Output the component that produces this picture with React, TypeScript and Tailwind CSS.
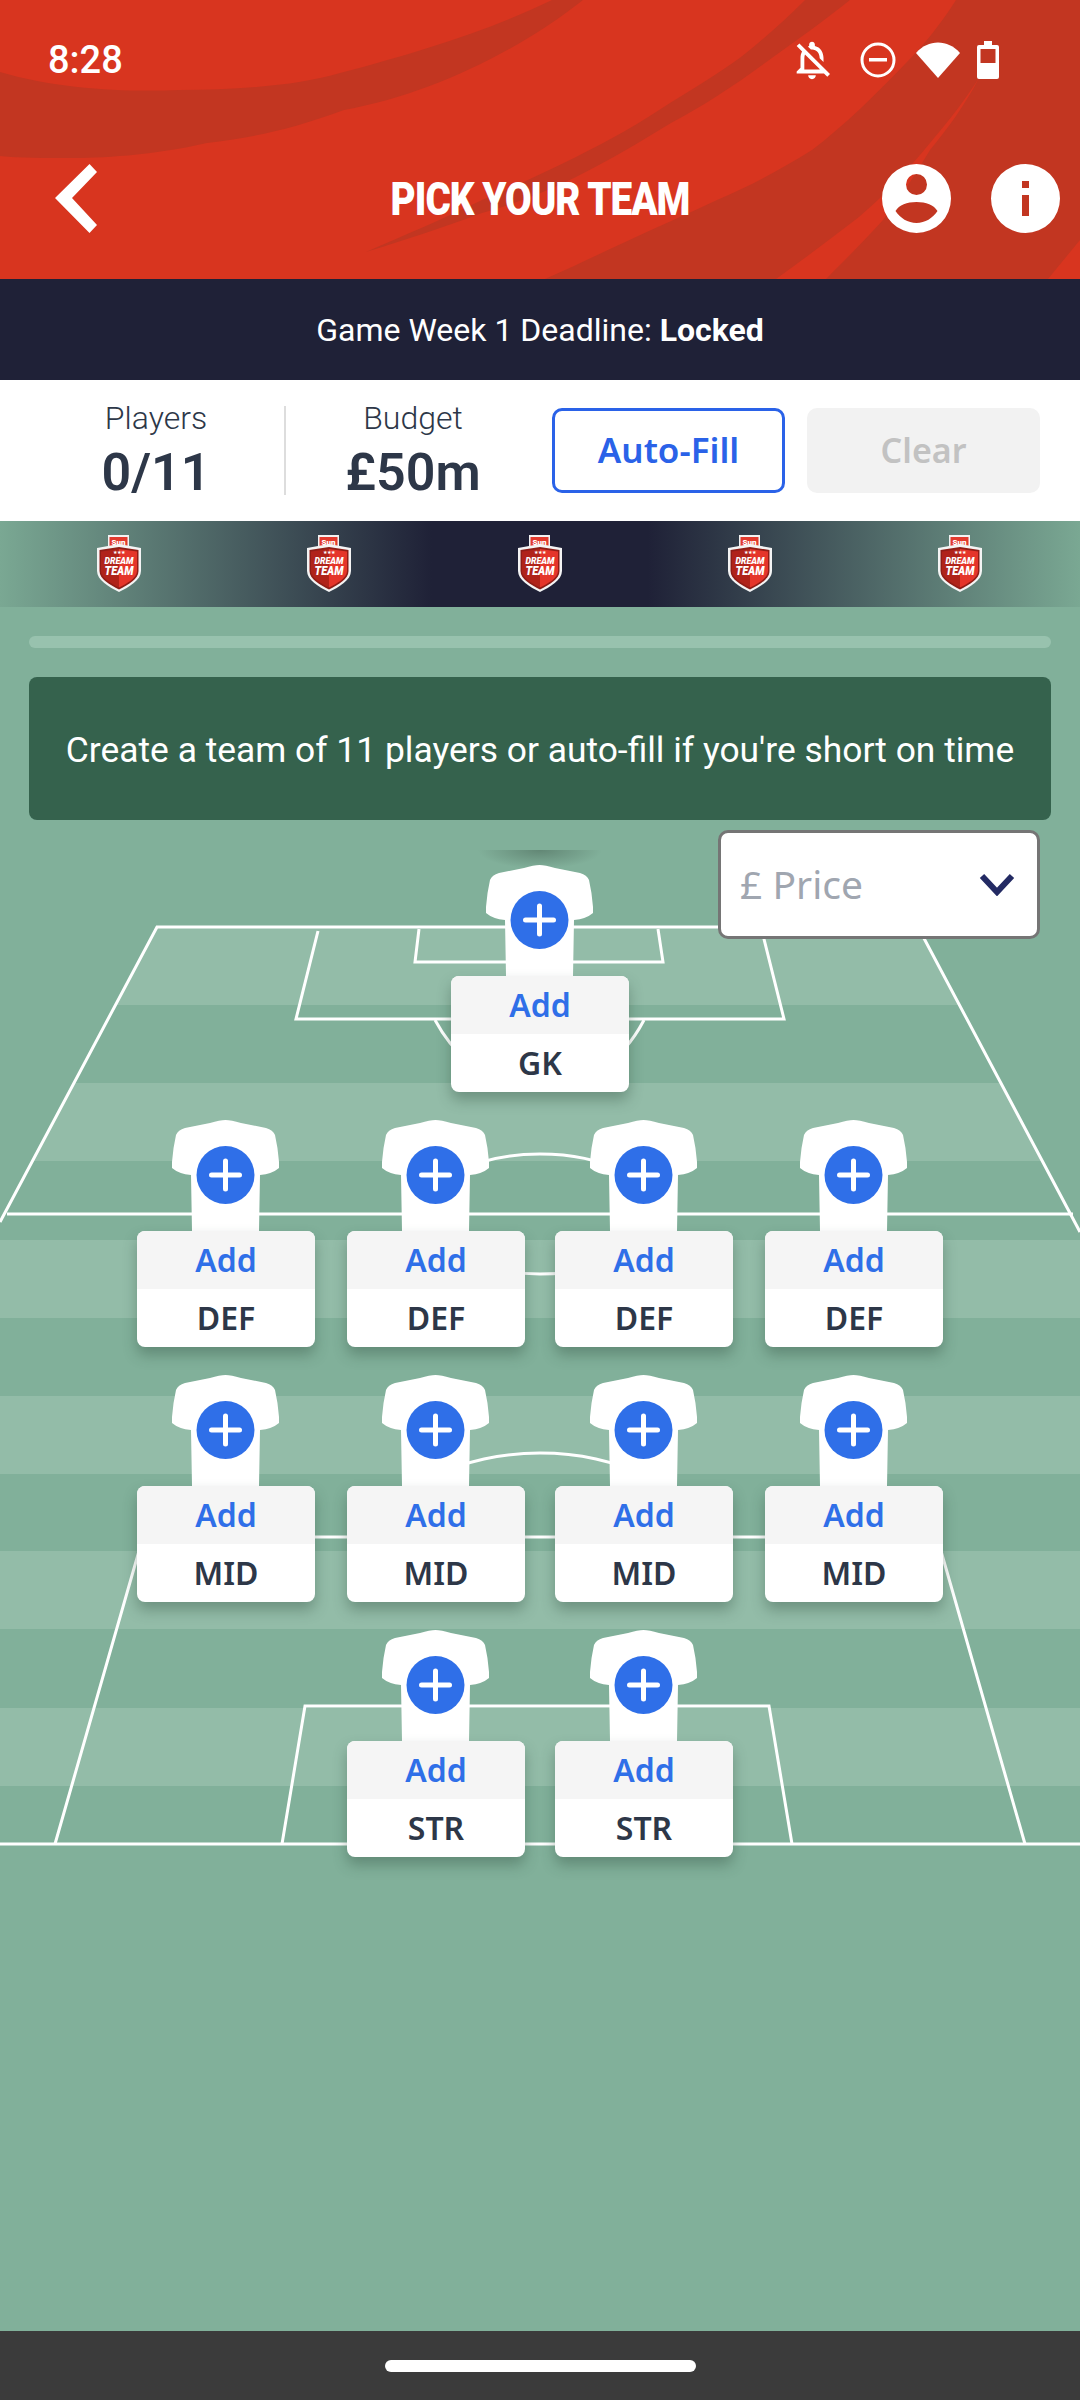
import { MdOutlineNotificationsOff } from 'react-icons/md';

const rows = [
  { label: 'GK', count: 1 },
  { label: 'DEF', count: 4 },
  { label: 'MID', count: 4 },
  { label: 'STR', count: 2 },
];

function HeaderArt() {
  return (
    <svg className="absolute inset-0 w-full h-full" viewBox="0 0 1080 279" preserveAspectRatio="none">
      <path
        fill="#c23621"
        d="M0 72 C60 90 130 92 179 90 C240 90 300 85 340 73 C420 52 490 30 552 0 L583 0 C520 50 430 95 344 110 C290 130 250 138 207 143 C150 156 100 158 69 158 C45 158 20 158 0 156 Z"
      />
      <path
        fill="#c23621"
        d="M805 0 C785 20 765 38 741 57 C720 72 695 88 670 103 C640 123 610 140 576 157 C545 172 515 187 482 200 C445 218 405 235 366 252 C405 240 445 227 482 213 C515 204 545 192 576 177 C610 160 640 142 671 123 C705 105 735 85 765 63 C797 40 825 20 850 0 Z"
      />
      <path
        fill="#c23621"
        d="M956 0 C942 22 925 44 906 63 C875 95 845 125 812 150 C780 170 750 186 717 200 C685 215 655 228 623 243 C595 256 570 268 545 279 L776 279 C805 258 832 238 859 217 C885 195 908 170 930 143 C948 122 965 100 979 78 C965 105 948 128 930 150 C915 175 900 198 883 220 C865 240 845 260 826 279 L1048 279 L1080 240 L1080 0 Z"
      />
    </svg>
  );
}

function StatusIcons() {
  return (
    <div className="flex items-center">
      <MdOutlineNotificationsOff size={46} className="text-white -mr-[3px] -my-[4px]" />
      <svg className="ml-[28px] w-[36px] h-[36px]" viewBox="0 0 36 36">
        <circle cx="18" cy="18" r="16" fill="none" stroke="white" strokeWidth="3" />
        <rect x="9" y="16" width="18" height="3.5" fill="white" />
      </svg>
      <svg className="ml-[20px] w-[44px] h-[36px]" viewBox="0 0 44 36">
        <path d="M0 11 C12 -3 32 -3 44 11 L22 36 Z" fill="white" />
      </svg>
      <svg className="ml-[17px] w-[22px] h-[38px]" viewBox="0 0 22 38">
        <path
          fillRule="evenodd"
          fill="white"
          d="M7 0 H15 V4 H20 Q22 4 22 6 V36 Q22 38 20 38 H2 Q0 38 0 36 V6 Q0 4 2 4 H7 Z M3.5 8 V22 H18.5 V8 Z"
        />
      </svg>
    </div>
  );
}

function TopBar() {
  return (
    <header className="relative h-[279px] bg-[#d8351f] text-white overflow-hidden">
      <HeaderArt />
      <div className="relative flex items-start justify-between h-[164px] pt-[41px] pl-[48px] pr-[81px]">
        <span className="font-['Roboto',sans-serif] text-[38px] leading-[38px] font-medium">8:28</span>
        <StatusIcons />
      </div>
      <div className="relative grid grid-cols-[1fr_auto_1fr] items-center h-[69px] px-[20px]">
        <svg className="ml-[35px] w-[42px] h-[69px]" viewBox="0 0 42 69">
          <path d="M0 34 L34.5 0 L42 8 L17 34 L42 61 L34.5 69 Z" fill="white" />
        </svg>
        <h1 className="w-[297px] text-center font-['Roboto',sans-serif] font-black text-[46px] leading-[46px] whitespace-nowrap flex justify-center">
          <span className="inline-block scale-x-[0.84] tracking-tight">PICK YOUR TEAM</span>
        </h1>
        <div className="flex justify-end gap-[40px]">
          <svg className="w-[69px] h-[69px]" viewBox="0 0 69 69">
            <path
              fillRule="evenodd"
              fill="white"
              d="M34.5 0 A34.5 34.5 0 1 1 34.5 69 A34.5 34.5 0 1 1 34.5 0 Z M34.5 10 A10.5 10.5 0 1 0 34.5 31 A10.5 10.5 0 1 0 34.5 10 Z M34.5 38 C25 38 17 41 13.5 47 C18 54 26 59 34.5 59 C43 59 51 54 55.5 47 C52 41 44 38 34.5 38 Z"
            />
          </svg>
          <svg className="w-[69px] h-[69px]" viewBox="0 0 69 69">
            <path
              fillRule="evenodd"
              fill="white"
              d="M34.5 0 A34.5 34.5 0 1 1 34.5 69 A34.5 34.5 0 1 1 34.5 0 Z M31 17 V24 H38 V17 Z M31 31 V52 H38 V31 Z"
            />
          </svg>
        </div>
      </div>
    </header>
  );
}

function Stats() {
  return (
    <section className="flex items-center h-[141px] bg-white text-[#2d3748] font-['Roboto',sans-serif]">
      <div className="w-[258px] ml-[27px] text-center">
        <p className="text-[32px] leading-[36px] font-light -mt-[2px]">Players</p>
        <p className="mt-[10px] text-[52px] leading-[54px] font-semibold">0/11</p>
      </div>
      <div className="-ml-[1px] w-[2px] h-[89px] bg-[#dddddd]" />
      <div className="w-[254px] text-center">
        <p className="text-[32px] leading-[36px] font-light -mt-[2px]">Budget</p>
        <p className="mt-[10px] text-[52px] leading-[54px] font-semibold">£50m</p>
      </div>
      <div className="ml-[12px] flex gap-[22px] font-['Noto_Sans',sans-serif] font-semibold text-[34px]">
        <button className="w-[233px] h-[85px] rounded-[10px] border-[3px] border-[#2a62e8] text-[#2a62e8] text-[35px]">
          Auto-Fill
        </button>
        <button className="w-[233px] h-[85px] rounded-[10px] bg-[#f2f2f2] text-[#c2c2c2]">Clear</button>
      </div>
    </section>
  );
}

function Badge() {
  return (
    <svg className="w-[44px] h-[58px]" viewBox="0 0 44 58">
      <rect x="11" y="1" width="21" height="12" fill="#f3f3f3" />
      <rect x="12.5" y="3" width="18" height="9" fill="#e23a2e" />
      <text x="21.5" y="10.5" textAnchor="middle" fontFamily="Roboto, sans-serif" fontWeight="900" fontSize="8" fill="white">
        Sun
      </text>
      <path d="M0 14 L22 10 L44 14 V37 C44 46 32 53 22 58 C12 53 0 46 0 37 Z" fill="#f4f4f4" />
      <path d="M2.5 16 L22 13 L41.5 16 V37 C41.5 45 31 51 22 55.5 C13 51 2.5 45 2.5 37 Z" fill="#8f1d16" />
      <path d="M4 17.5 L22 15 V53.5 C14 49.5 4 44 4 37 Z" fill="#b0231a" />
      <path d="M40 17.5 L22 15 V53.5 C30 49.5 40 44 40 37 Z" fill="#e5352a" />
      <text x="22" y="19.5" textAnchor="middle" fontSize="5" fill="white">★★★</text>
      <text x="22" y="29.5" textAnchor="middle" fontFamily="Roboto, sans-serif" fontStyle="italic" fontWeight="900" fontSize="9.5" fill="white" textLength="29" lengthAdjust="spacingAndGlyphs">
        DREAM
      </text>
      <text x="22" y="40.5" textAnchor="middle" fontFamily="Roboto, sans-serif" fontStyle="italic" fontWeight="900" fontSize="12.5" fill="white" textLength="29" lengthAdjust="spacingAndGlyphs">
        TEAM
      </text>
    </svg>
  );
}

function BadgeStrip() {
  return (
    <div className="flex justify-between h-[86px] pt-[13px] pl-[97px] pr-[98px] bg-[linear-gradient(to_right,#7aa893_0%,#1f2137_40%,#1f2137_60%,#7aa893_100%)]">
      {[0, 1, 2, 3, 4].map((i) => (
        <Badge key={i} />
      ))}
    </div>
  );
}

function PitchLines() {
  const stripes = [927, 1083, 1240, 1396, 1551, 1708];
  return (
    <svg className="absolute inset-0 w-full h-full" viewBox="0 607 1080 1724" preserveAspectRatio="none">
      <defs>
        <radialGradient id="gkShade" cx="540" cy="850" r="62" gradientUnits="userSpaceOnUse" gradientTransform="translate(0 850) scale(1 0.3) translate(0 -850)">
          <stop offset="0" stopColor="#4d6b5c" stopOpacity="0.6" />
          <stop offset="1" stopColor="#4d6b5c" stopOpacity="0" />
        </radialGradient>
        <clipPath id="pitchTop">
          <polygon points="157,927 918,927 1080,1232 1080,2331 0,2331 0,1222" />
        </clipPath>
      </defs>
      <rect x="470" y="850" width="140" height="18" fill="url(#gkShade)" />
      <g fill="#93bca8" clipPath="url(#pitchTop)">
        {stripes.map((y) => (
          <rect key={y} x="0" y={y} width="1080" height="78" />
        ))}
      </g>
      <g fill="none" stroke="white" strokeWidth="3">
        <path d="M0 1222 L157 927 H918 L1080 1232" />
        <path d="M318 931 L296 1019 H784 L762 931" />
        <path d="M419 929 L415 962 H663 L658 929" />
        <path d="M435 1020 Q470 1085 540 1085 Q610 1085 644 1020" />
        <path d="M7 1214 H1073" />
        <ellipse cx="540" cy="1214" rx="116" ry="60" />
        <path d="M0 1844 H1080" />
        <path d="M55 1844 L143 1537 H937 L1025 1844" />
        <path d="M282 1844 L305 1706 H769 L792 1844" />
        <path d="M388 1537 A152 84 0 0 1 692 1537" />
      </g>
    </svg>
  );
}

function Shirt() {
  return (
    <svg className="block w-[107px] h-[111px] self-start ml-[35px]" viewBox="0 0 107 111">
      <path
        fill="white"
        d="M38 3 Q48 0 53.5 0 Q59 0 69 3 L94 8 Q101 10 103 15 Q106 28 107 42 V48 Q100 54 88 55 L87 111 H20 L19 55 Q7 54 0 48 V42 Q1 28 4 15 Q6 10 13 8 Z"
      />
      <circle cx="53.5" cy="55" r="29" fill="#2f6fe8" />
      <rect x="37" y="52.5" width="33" height="5" rx="2.5" fill="white" />
      <rect x="51" y="38.5" width="5" height="33" rx="2.5" fill="white" />
    </svg>
  );
}

function Slot({ label, className = '' }: { label: string; className?: string }) {
  return (
    <div className={`flex flex-col items-center w-[178px] ${className}`}>
      <Shirt />
      <div className="relative w-full h-[116px] rounded-[8px] bg-white overflow-hidden shadow-[0_8px_14px_rgba(40,70,55,0.35)] font-['Noto_Sans',sans-serif] text-[32px] font-semibold text-center">
        <div className="h-[58px] leading-[58px] bg-[#f5f5f5] text-[#2f6fe8]">Add</div>
        <div className="h-[58px] leading-[58px] text-[#2d3748]">{label}</div>
      </div>
    </div>
  );
}

function Pitch() {
  return (
    <main className="relative flex-1 bg-[#81b09a] pt-[29px]">
      <PitchLines />
      <div className="relative mx-[29px] h-[12px] rounded-full bg-[#98c2ae]" />
      <div className="relative mx-[29px] mt-[29px] h-[143px] pt-[4px] rounded-[8px] bg-[#35624d] flex items-center justify-center font-['Roboto',sans-serif] text-[35.4px] text-white">
        Create a team of 11 players or auto-fill if you're short on time
      </div>
      <div className="relative mt-[45px] flex flex-col gap-[28px]">
        {rows.map((row) => (
          <div key={row.label} className="flex justify-center gap-[30px]">
            {Array.from({ length: row.count }).map((_, i) => (
              <Slot key={i} label={row.label} className={row.count === 4 && i % 2 === 0 ? 'mr-[2px]' : ''} />
            ))}
          </div>
        ))}
      </div>
      {/* price filter sits over the pitch */}
      <div className="absolute left-[718px] top-[223px] w-[322px] h-[109px] rounded-[10px] border-[3px] border-[#757575] bg-white flex items-start justify-between pl-[19px] pr-[22px] pt-[27px] font-['Noto_Sans',sans-serif] text-[39px] leading-[48px] text-[#a0a6b0]">
        <span>£ Price</span>
        <svg className="w-[36px] h-[24px] mt-[12px]" viewBox="0 0 36 24">
          <path d="M3 4 L18 20 L33 4" fill="none" stroke="#232a63" strokeWidth="6" />
        </svg>
      </div>
    </main>
  );
}

export default function App() {
  return (
    <div className="flex flex-col w-[1080px] h-[2400px] overflow-hidden">
      <TopBar />
      <div className="h-[101px] bg-[#1f2137] flex items-center justify-center text-white font-['Roboto',sans-serif] text-[32px]">
        <span>
          Game Week 1 Deadline: <strong className="font-bold">Locked</strong>
        </span>
      </div>
      <Stats />
      <BadgeStrip />
      <Pitch />
      <div className="h-[69px] pt-px bg-[#3b3b3b] flex items-center justify-center">
        <div className="w-[311px] h-[12px] rounded-full bg-white" />
      </div>
    </div>
  );
}
